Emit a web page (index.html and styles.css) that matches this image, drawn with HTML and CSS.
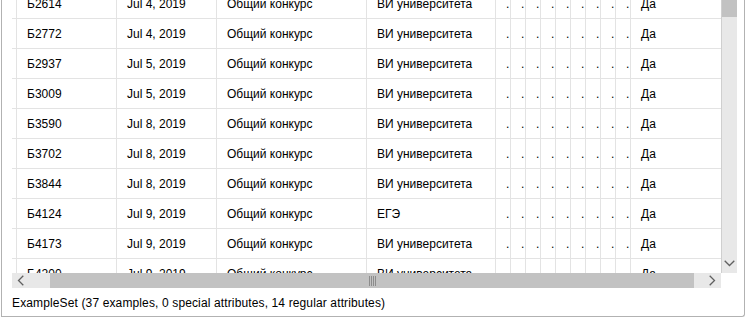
FILE: index.html
```html
<!DOCTYPE html>
<html>
<head>
<meta charset="utf-8">
<link rel="stylesheet" href="styles.css">
</head>
<body>
<div class="panel">
  <div class="viewer">
    <div class="viewport">
      <div class="rows" id="rows"></div>
    </div>
    <div class="vscroll">
      <div class="vthumb"></div>
      <div class="vtrack"></div>
      <div class="vbtn">
        <svg width="11" height="7" viewBox="0 0 11 7"><path d="M0.7 0.7 L5.5 5.5 L10.3 0.7" fill="none" stroke="#606060" stroke-width="1.3"/></svg>
      </div>
    </div>
    <div class="hscroll">
      <div class="hbtn hleft">
        <svg width="7" height="11" viewBox="0 0 7 11"><path d="M6.3 0.7 L1.5 5.5 L6.3 10.3" fill="none" stroke="#606060" stroke-width="1.3"/></svg>
      </div>
      <div class="htrack-l"></div>
      <div class="hthumb"><span class="grip"></span><span class="grip"></span><span class="grip"></span><span class="grip"></span></div>
      <div class="htrack-r"></div>
      <div class="hbtn hright">
        <svg width="7" height="11" viewBox="0 0 7 11"><path d="M0.7 0.7 L5.5 5.5 L0.7 10.3" fill="none" stroke="#606060" stroke-width="1.3"/></svg>
      </div>
    </div>
    <div class="corner"></div>
  </div>
  <div class="status">ExampleSet (37 examples, 0 special attributes, 14 regular attributes)</div>
</div>
<script src="script.js"></script>
</body>
</html>
```

FILE: script.js
```js
var data = [
  ["Б2614","Jul 4, 2019","Общий конкурс","ВИ университета","Да"],
  ["Б2772","Jul 4, 2019","Общий конкурс","ВИ университета","Да"],
  ["Б2937","Jul 5, 2019","Общий конкурс","ВИ университета","Да"],
  ["Б3009","Jul 5, 2019","Общий конкурс","ВИ университета","Да"],
  ["Б3590","Jul 8, 2019","Общий конкурс","ВИ университета","Да"],
  ["Б3702","Jul 8, 2019","Общий конкурс","ВИ университета","Да"],
  ["Б3844","Jul 8, 2019","Общий конкурс","ВИ университета","Да"],
  ["Б4124","Jul 9, 2019","Общий конкурс","ЕГЭ","Да"],
  ["Б4173","Jul 9, 2019","Общий конкурс","ВИ университета","Да"],
  ["Б4200","Jul 9, 2019","Общий конкурс","ВИ университета","Да"]
];
var rows = document.getElementById("rows");
data.forEach(function (r) {
  var row = document.createElement("div");
  row.className = "row";
  var html = '<div class="cell c0"></div>';
  html += '<div class="cell">' + r[0] + '</div>';
  html += '<div class="cell">' + r[1] + '</div>';
  html += '<div class="cell">' + r[2] + '</div>';
  html += '<div class="cell">' + r[3] + '</div>';
  for (var i = 0; i < 9; i++) html += '<div class="cell narrow">.</div>';
  html += '<div class="cell">' + r[4] + '</div>';
  row.innerHTML = html;
  rows.appendChild(row);
});
```

FILE: styles.css
```css
html, body {
  margin: 0;
  padding: 0;
  background: #ffffff;
}
body {
  width: 749px;
  height: 321px;
  overflow: hidden;
  font-family: "Liberation Sans", Arial, sans-serif;
  font-size: 12px;
  color: #000;
}
.panel {
  margin-left: 1px;
  width: 744px;
  height: 317px;
  border-left: 1px solid #b2b2b2;
  border-right: 1px solid #b2b2b2;
  border-bottom: 1px solid #b2b2b2;
  border-bottom-right-radius: 3px;
  padding-left: 10px;
  box-sizing: border-box;
  display: flex;
  flex-direction: column;
}
.viewer {
  display: grid;
  grid-template-columns: 709px 16px;
  grid-template-rows: 273px 15px;
}
.viewport {
  overflow: hidden;
  height: 273px;
}
.rows {
  margin-top: -11px;
}
.row {
  display: grid;
  grid-template-columns: 4px 100px 100px 150px 129px repeat(9, 15px) 91px;
  height: 30px;
  box-sizing: border-box;
  border-bottom: 1px solid #e3e3e3;
}
.cell {
  border-left: 1px solid #e3e3e3;
  padding-left: 10px;
  line-height: 30px;
  white-space: nowrap;
  overflow: hidden;
}
.c0 {
  border-left: none;
  padding: 0;
}
.narrow {
  padding-left: 10px;
}
.vscroll {
  display: flex;
  flex-direction: column;
  border-left: 1px solid #cfcfcf;
  background: #e8e8e8;
}
.vthumb {
  height: 17px;
  background: #c2c2c2;
}
.vtrack {
  flex: 1;
}
.vbtn {
  height: 16px;
  display: flex;
  align-items: flex-start;
  justify-content: center;
  padding-top: 3px;
  box-sizing: border-box;
}
.hscroll {
  display: flex;
  background: #e8e8e8;
  height: 15px;
}
.hbtn {
  width: 16px;
  display: flex;
  align-items: center;
  justify-content: center;
}
.hleft {
  justify-content: flex-start;
  padding-left: 5px;
  box-sizing: border-box;
}
.hright {
  justify-content: flex-start;
  padding-left: 4px;
  box-sizing: border-box;
}
.htrack-l {
  width: 22px;
}
.htrack-r {
  width: 11px;
}
.hthumb {
  flex: 1;
  background: #c2c2c2;
  display: flex;
  justify-content: center;
  align-items: center;
  gap: 1px;
}
.grip {
  width: 1px;
  height: 10px;
  background: #8c8c8c;
}
.corner {
  background: #fff;
}
.status {
  height: 29px;
  line-height: 30px;
  padding-left: 0;
  letter-spacing: 0.13px;
}
```
